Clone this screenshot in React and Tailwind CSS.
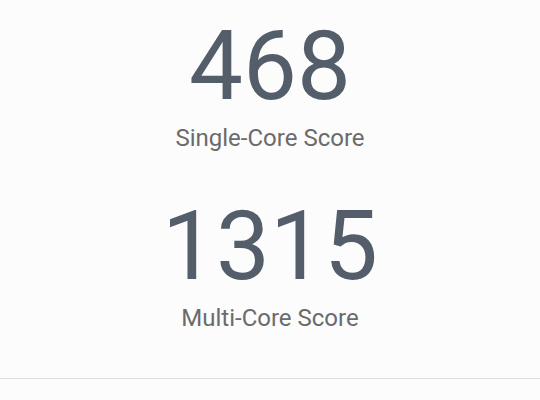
import React from 'react';

const scores = [
  { value: '468', label: 'Single-Core Score' },
  { value: '1315', label: 'Multi-Core Score' },
];

const App = () => {
  return (
    <div className="w-[540px] h-[400px] bg-[#fcfcfc] overflow-hidden" style={{ fontFamily: 'Roboto, sans-serif' }}>
      <div className="flex flex-col items-center pt-[18px] h-[379px] border-b border-[#dedede]">
        {scores.map((s, i) => (
          <div key={s.label} className={`flex flex-col items-center ${i > 0 ? 'mt-[44px]' : ''}`}>
            <div className="text-[96px] leading-[96px] text-[#535e6a]">{s.value}</div>
            <div className="text-[24px] leading-[32px] text-[#6b6b6b] mt-[8px]">{s.label}</div>
          </div>
        ))}
      </div>
    </div>
  );
};

export default App;
